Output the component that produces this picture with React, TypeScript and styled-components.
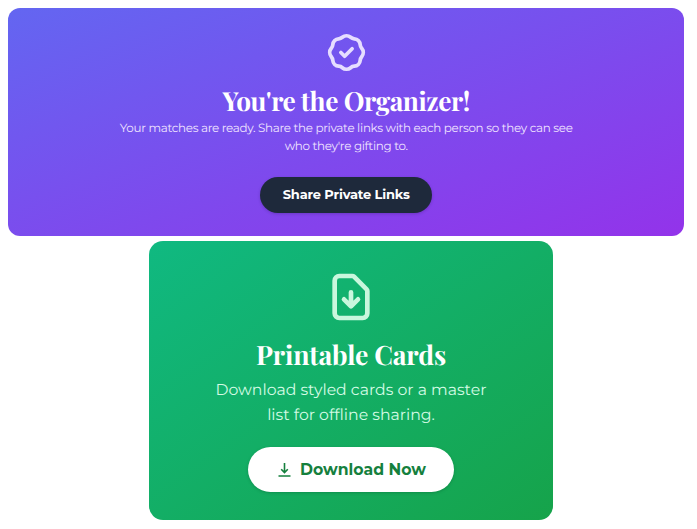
import React from "react";
import styled, { createGlobalStyle } from "styled-components";
import { HiOutlineBadgeCheck, HiOutlineDocumentDownload } from "react-icons/hi";

const GlobalStyle = createGlobalStyle`
  *, *::before, *::after { box-sizing: border-box; }
  body {
    margin: 0;
    background: #fff;
    font-family: Montserrat, Inter, "Open Sans", sans-serif;
    text-rendering: geometricPrecision;
  }
`;

const Page = styled.main`
  display: flex;
  flex-direction: column;
  gap: 5.5px;
  width: 697px;
  height: 529px;
  padding: 8px 13px 0 8.4px;
  overflow: hidden;
`;

const Card = styled.section`
  display: flex;
  flex-direction: column;
  align-items: center;
  color: #fff;
  text-align: center;
  border-radius: 12px;
`;

const OrganizerCard = styled(Card)`
  height: 227.5px;
  padding-top: 22px;
  background: linear-gradient(to bottom right, #6366f1, #9333ea);

  > svg { width: 45px; height: 45px; color: #e6deff; }
`;

const PrintCard = styled(Card)`
  width: 404px;
  height: 279px;
  margin-left: 140.6px;
  padding-top: 28px;
  border-radius: 14px;
  background: linear-gradient(to bottom right, #10b981, #16a34a);

  > svg { width: 56px; height: 56px; color: #c9f7dd; }
`;

const Title = styled.h2<{ $size: number; $top: number; $tracking: number }>`
  margin: ${(p) => p.$top}px 0 0;
  font: 700 ${(p) => p.$size}px/34px "Playfair Display", "Liberation Serif", serif;
  letter-spacing: ${(p) => p.$tracking}px;
  white-space: nowrap;
`;

const Copy = styled.p<{ $size: number; $line: number; $top: number; $tracking: number; $tone: string }>`
  display: flex;
  flex-direction: column;
  align-items: center;
  margin: ${(p) => p.$top}px 0 0;
  color: ${(p) => p.$tone};
  font-size: ${(p) => p.$size}px;
  line-height: ${(p) => p.$line}px;
  letter-spacing: ${(p) => p.$tracking}px;
  white-space: nowrap;
`;

const Pill = styled.button`
  display: flex;
  align-items: center;
  justify-content: center;
  padding: 0;
  border: 0;
  border-radius: 999px;
  font-family: inherit;
  font-weight: 700;
  white-space: nowrap;
`;

const ShareButton = styled(Pill)`
  width: 172px;
  height: 36px;
  margin-top: 22.5px;
  padding-bottom: 1px;
  color: #fff;
  background: #1e293b;
  font-size: 13px;
  letter-spacing: -0.18px;
  box-shadow: 0 1px 3px rgba(30, 20, 80, 0.25);
`;

const DownloadButton = styled(Pill)`
  gap: 9px;
  width: 206px;
  height: 45px;
  margin-top: 20px;
  padding-left: 2px;
  color: #15803d;
  background: #fff;
  font-size: 15.7px;
  box-shadow: 0 1px 3px rgba(0, 60, 30, 0.25);
`;

const DownloadIcon = () => (
  <svg width="13" height="14" viewBox="0 0 13 14" fill="none" stroke="currentColor" strokeWidth="1.6">
    <path d="M6.5 0v9M3.2 6.2l3.3 3.3 3.3-3.3M.5 13h12" />
  </svg>
);

export default function App() {
  return (
    <>
      <GlobalStyle />
      <Page>
        <OrganizerCard>
          <HiOutlineBadgeCheck />
          <Title $size={26.2} $top={9} $tracking={-0.4}>You're the Organizer!</Title>
          <Copy $size={11.9} $line={17.5} $top={1} $tracking={-0.3} $tone="#f0e4ff">
            <span>Your matches are ready. Share the private links with each person so they can see</span>
            <span>who they're gifting to.</span>
          </Copy>
          <ShareButton>Share Private Links</ShareButton>
        </OrganizerCard>
        <PrintCard>
          <HiOutlineDocumentDownload />
          <Title $size={26.5} $top={12} $tracking={-0.15}>Printable Cards</Title>
          <Copy $size={15.7} $line={24.5} $top={7} $tracking={0} $tone="#d3fbe4">
            <span>Download styled cards or a master</span>
            <span>list for offline sharing.</span>
          </Copy>
          <DownloadButton>
            <DownloadIcon />
            <span>Download Now</span>
          </DownloadButton>
        </PrintCard>
      </Page>
    </>
  );
}
